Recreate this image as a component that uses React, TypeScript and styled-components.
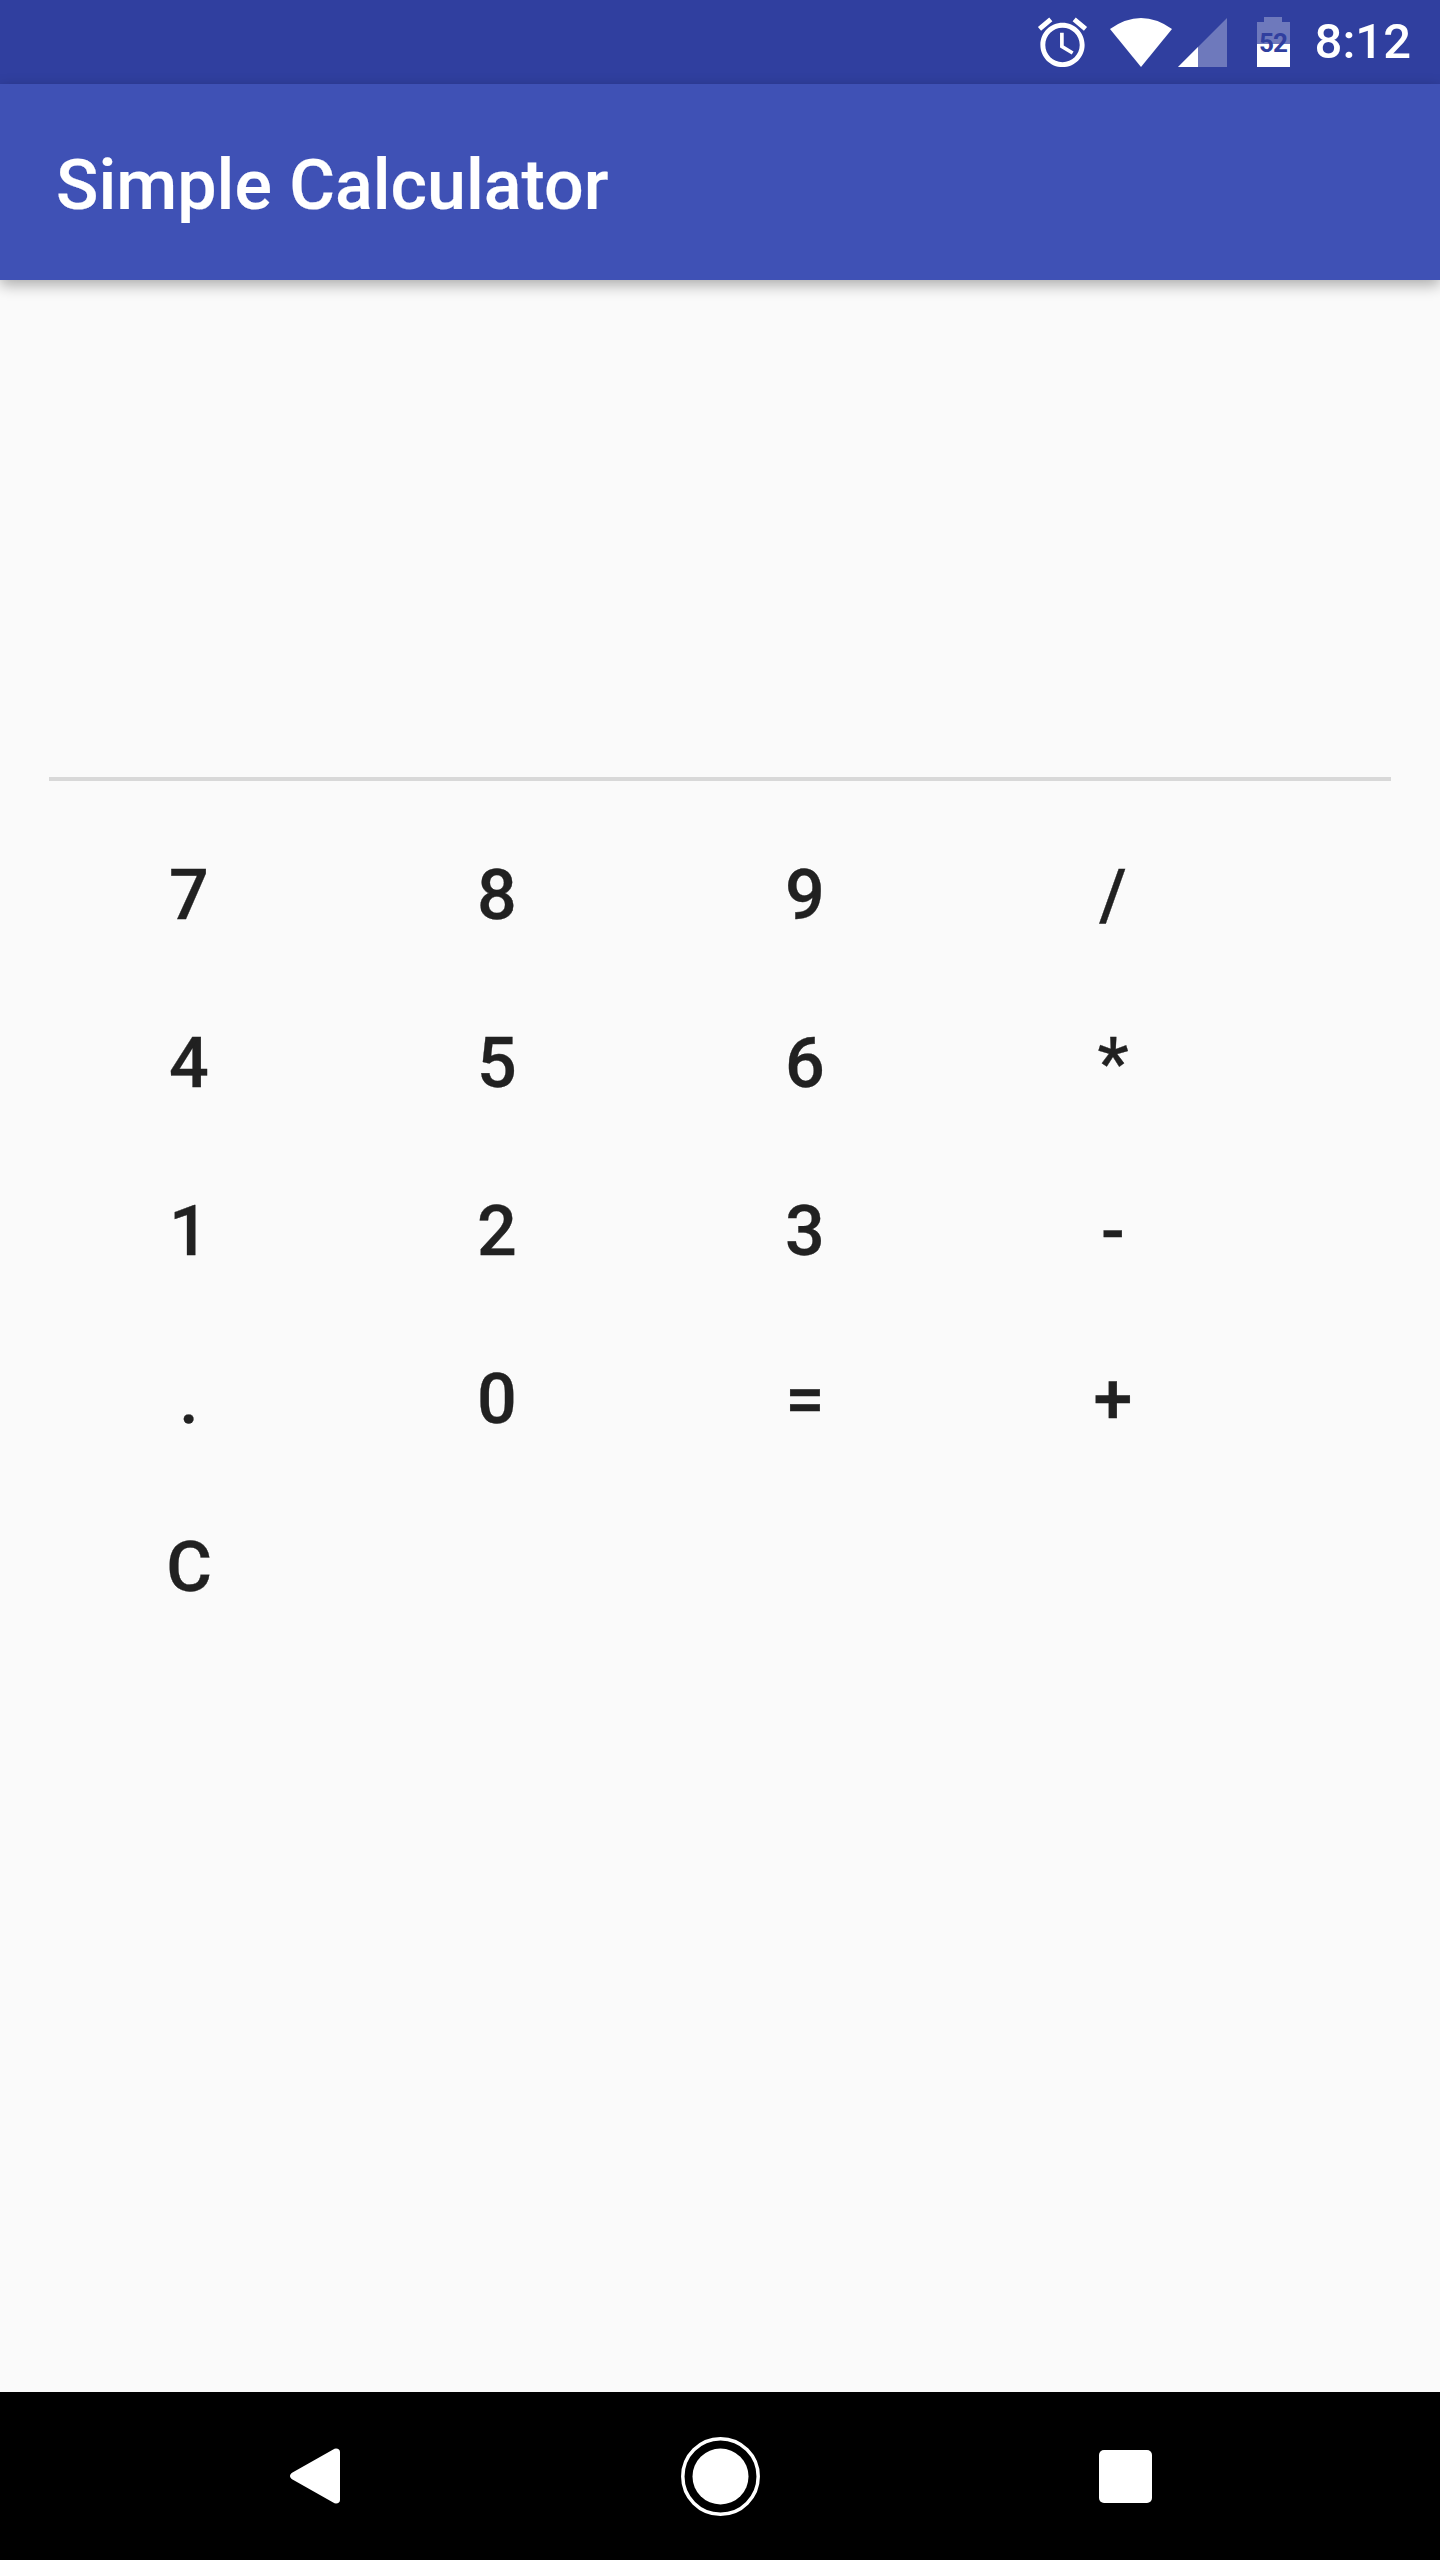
import React from 'react'
import styled, { createGlobalStyle } from 'styled-components'

const keys = ['7', '8', '9', '/', '4', '5', '6', '*', '1', '2', '3', '-', '.', '0', '=', '+', 'C']

function App() {
  return (
    <Screen>
      <GlobalStyle />
      <StatusBar>
        <AlarmIcon viewBox="0 0 24 24" fill="#fff">
          <path d="M22 5.72l-4.6-3.86-1.29 1.53 4.6 3.86L22 5.72zM7.88 3.39L6.6 1.86 2 5.71l1.29 1.53 4.59-3.85zM12.5 8H11v6l4.75 2.85.75-1.23-4-2.37V8zM12 4c-4.97 0-9 4.03-9 9s4.03 9 9 9 9-4.03 9-9-4.03-9-9-9zm0 16c-3.87 0-7-3.13-7-7s3.13-7 7-7 7 3.13 7 7-3.13 7-7 7z" />
        </AlarmIcon>
        <WifiIcon viewBox="0 0 62 49" fill="#fff">
          <path d="M0 11Q31 -11 62 11L31 49Z" />
        </WifiIcon>
        <SignalIcon viewBox="0 0 49 49" fill="#fff">
          <path d="M0 49L49 0V49Z" opacity="0.3" />
          <path d="M0 49L20 29V49Z" />
        </SignalIcon>
        <BatteryIcon viewBox="0 0 33 50" fill="#fff">
          <path d="M7 0H25V5H33V50H0V5H7Z" opacity="0.3" />
          <rect x="0" y="27" width="33" height="23" />
          <BatteryLevel x="16" y="35" textAnchor="middle">52</BatteryLevel>
        </BatteryIcon>
        <Clock>8:12</Clock>
      </StatusBar>

      <AppBar>
        <Title>Simple Calculator</Title>
      </AppBar>

      <Content>
        <Display />
        <Keypad>
          {keys.map((key) => (
            <Key key={key}>{key}</Key>
          ))}
        </Keypad>
      </Content>

      <NavBar>
        <NavButton>
          <NavIcon $size={50} viewBox="0 0 50 56" fill="#fff">
            <path d="M46 0.5C48.5 0.5 50 2 50 4V52C50 54 48.5 55.5 46 55.5C45 55.5 44 55 43.2 54.4L2.5 31.5C-0.8 29.6 -0.8 26.4 2.5 24.5L43.2 1.6C44 1 45 0.5 46 0.5Z" />
          </NavIcon>
        </NavButton>
        <NavButton>
          <NavIcon $size={79} viewBox="0 0 79 79" fill="#fff">
            <circle cx="39.5" cy="39.5" r="37.7" fill="none" stroke="#fff" strokeWidth="3.5" />
            <circle cx="39.5" cy="39.5" r="28" />
          </NavIcon>
        </NavButton>
        <NavButton>
          <RecentsSquare />
        </NavButton>
      </NavBar>
    </Screen>
  )
}

export default App

const GlobalStyle = createGlobalStyle`
  body {
    margin: 0;
    background-color: #fafafa;
    font-family: 'Roboto', 'Liberation Sans', sans-serif;
  }
`

const Screen = styled.div`
  display: flex;
  flex-direction: column;
  width: 1440px;
  height: 2560px;
  overflow: hidden;
`

const StatusBar = styled.div`
  display: flex;
  align-items: center;
  justify-content: flex-end;
  flex: none;
  height: 84px;
  padding-right: 29px;
  box-sizing: border-box;
  background-color: #303f9f;
`

const AlarmIcon = styled.svg`
  width: 59px;
  height: 59px;
  margin-right: 18px;
`

const WifiIcon = styled.svg`
  width: 62px;
  height: 49px;
  margin-right: 6px;
`

const SignalIcon = styled.svg`
  width: 49px;
  height: 49px;
  margin-right: 30px;
`

const BatteryIcon = styled.svg`
  width: 33px;
  height: 50px;
  margin-right: 25px;
`

const BatteryLevel = styled.text`
  fill: #303f9f;
  font-family: 'Roboto', sans-serif;
  font-size: 26px;
  font-weight: 700;
  letter-spacing: -1px;
`

const Clock = styled.span`
  color: #fff;
  font-size: 49px;
  font-weight: 500;
  line-height: 84px;
`

const AppBar = styled.header`
  position: relative;
  z-index: 1;
  display: flex;
  align-items: center;
  flex: none;
  height: 196px;
  padding: 6px 0 0 56px;
  box-sizing: border-box;
  background-color: #3f51b5;
  box-shadow: 0 5px 14px rgba(0, 0, 0, 0.32);
`

const Title = styled.h1`
  margin: 0;
  color: #fff;
  font-size: 70px;
  font-weight: 500;
  -webkit-text-stroke: 0.2px #fff;
`

const Content = styled.main`
  flex: 1;
  background-color: #fafafa;
`

const Display = styled.div`
  height: 497px;
  margin: 0 49px;
  border-bottom: 4px solid #d8d8d8;
`

const Keypad = styled.div`
  display: grid;
  grid-template-columns: repeat(4, 308px);
  grid-auto-rows: 168px;
  padding: 30px 0 0 35px;
`

const Key = styled.button`
  padding: 0;
  border: none;
  background: none;
  color: #212121;
  font-family: inherit;
  font-size: 70px;
  font-weight: 500;
  -webkit-text-stroke: 0.3px #212121;
`

const NavBar = styled.nav`
  display: flex;
  justify-content: center;
  flex: none;
  height: 168px;
  background-color: #000;
`

const NavButton = styled.div`
  display: flex;
  align-items: center;
  justify-content: center;
  width: 405px;
`

const NavIcon = styled.svg<{ $size: number }>`
  width: ${(p) => p.$size}px;
`

const RecentsSquare = styled.div`
  width: 53px;
  height: 53px;
  border-radius: 5px;
  background-color: #fff;
`
